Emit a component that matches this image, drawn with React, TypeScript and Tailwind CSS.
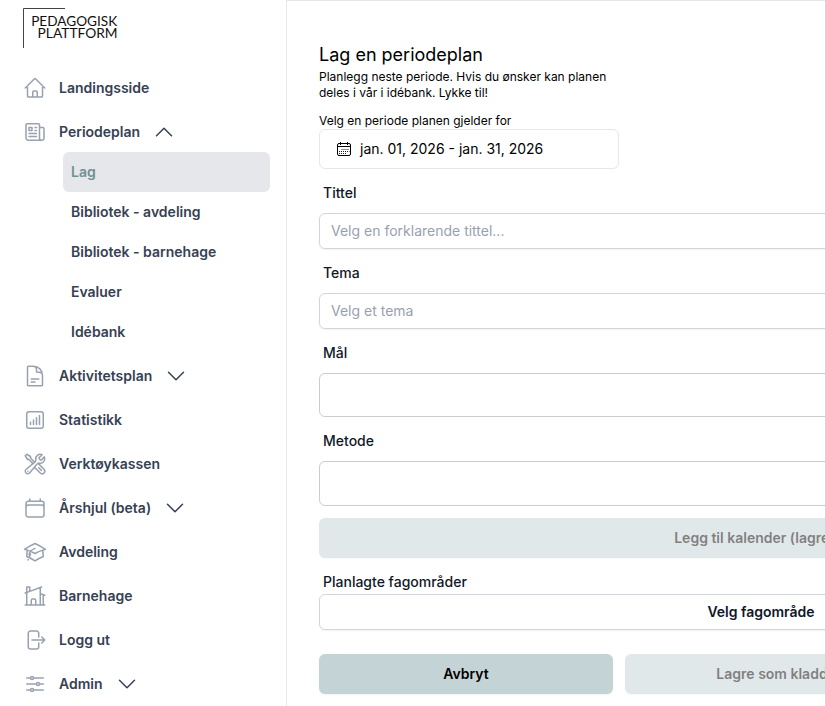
import type { ReactNode } from "react";
import clsx from "clsx";
import {
  HiOutlineHome,
  HiOutlineNewspaper,
  HiOutlineDocumentText,
  HiOutlineWrenchScrewdriver,
  HiOutlineCalendar,
  HiOutlineAcademicCap,
  HiOutlineHomeModern,
  HiOutlineArrowRightOnRectangle,
  HiOutlineAdjustmentsHorizontal,
  HiOutlineChevronDown,
  HiOutlineChevronUp,
} from "react-icons/hi2";
import type { IconType } from "react-icons";

type NavItem = {
  name: string;
  icon: IconType;
  open?: boolean;
  children?: string[];
};

const ChartSquareIcon: IconType = ({ className }) => (
  <svg
    className={className}
    viewBox="0 0 24 24"
    fill="none"
    stroke="currentColor"
    strokeWidth={1.5}
    strokeLinecap="round"
    strokeLinejoin="round"
  >
    <path d="M7.5 14.25v2.25m3-4.5v4.5m3-6.75v6.75m3-9v9M6 20.25h12A2.25 2.25 0 0 0 20.25 18V6A2.25 2.25 0 0 0 18 3.75H6A2.25 2.25 0 0 0 3.75 6v12A2.25 2.25 0 0 0 6 20.25Z" />
  </svg>
);

const MonthIcon = ({ className }: { className?: string }) => (
  <svg className={className} viewBox="0 0 16 16" fill="none" stroke="currentColor">
    <rect x="1.5" y="2.5" width="13" height="12" rx="1.5" />
    <path d="M1.5 5.5h13" />
    <path d="M4.5 1v3M11.5 1v3" />
    <path
      d="M5.5 8.5h8M3 10.5h10.5M3 12.5h8"
      strokeWidth="0.9"
      strokeDasharray="1 1"
    />
  </svg>
);

const navigation: NavItem[] = [
  { name: "Landingsside", icon: HiOutlineHome },
  {
    name: "Periodeplan",
    icon: HiOutlineNewspaper,
    open: true,
    children: [
      "Lag",
      "Bibliotek - avdeling",
      "Bibliotek - barnehage",
      "Evaluer",
      "Idébank",
    ],
  },
  { name: "Aktivitetsplan", icon: HiOutlineDocumentText, children: [] },
  { name: "Statistikk", icon: ChartSquareIcon },
  { name: "Verktøykassen", icon: HiOutlineWrenchScrewdriver },
  { name: "Årshjul (beta)", icon: HiOutlineCalendar, children: [] },
  { name: "Avdeling", icon: HiOutlineAcademicCap },
  { name: "Barnehage", icon: HiOutlineHomeModern },
  { name: "Logg ut", icon: HiOutlineArrowRightOnRectangle },
  { name: "Admin", icon: HiOutlineAdjustmentsHorizontal, children: [] },
];

const Logo = () => (
  <svg className="block h-10 w-24" viewBox="0 0 96 40">
    <path d="M0.5 40V0.5H42" fill="none" stroke="#444" strokeWidth="1" />
    <g fill="#111" fontFamily="Lato, sans-serif" fontSize="13.4">
      <text x="8.2" y="18" textLength="86" lengthAdjust="spacingAndGlyphs">
        PEDAGOGISK
      </text>
      <text x="14.6" y="30.2" textLength="80" lengthAdjust="spacingAndGlyphs">
        PLATTFORM
      </text>
    </g>
  </svg>
);

const Sidebar = () => (
  <aside className="flex w-[287px] shrink-0 flex-col border-r border-gray-200 pl-[23px] pt-2">
    <Logo />
    <nav className="mt-5 w-[247px]">
      <ul className="flex flex-col gap-1">
        {navigation.map((item) => (
          <li key={item.name}>
            <a
              href="#"
              className="flex h-10 items-center text-sm font-semibold text-gray-700"
            >
              <item.icon className="h-6 w-6 text-gray-400" />
              <span className="ml-3">{item.name}</span>
              {item.children &&
                (item.open ? (
                  <HiOutlineChevronUp className="ml-3 h-6 w-6" />
                ) : (
                  <HiOutlineChevronDown className="ml-3 h-6 w-6" />
                ))}
            </a>
            {item.open && (
              <ul className="ml-10">
                {item.children?.map((child) => (
                  <li key={child}>
                    <a
                      href="#"
                      className={clsx(
                        "flex h-10 items-center rounded-md px-2 text-sm font-semibold",
                        child === "Lag"
                          ? "bg-gray-200 text-[#729094]"
                          : "text-gray-700"
                      )}
                    >
                      {child}
                    </a>
                  </li>
                ))}
              </ul>
            )}
          </li>
        ))}
      </ul>
    </nav>
  </aside>
);

const Label = ({ children }: { children: ReactNode }) => (
  <label className="block pl-1 text-sm font-medium leading-6 text-gray-900">
    {children}
  </label>
);

const inputStyle =
  "block w-full rounded-md border border-gray-300 px-[11px] pb-0.5 text-sm shadow-xs placeholder:text-gray-400";

const PlanForm = () => (
  <form className="w-[906px]">
    <h1 className="text-lg leading-7">Lag en periodeplan</h1>
    <p className="w-72 text-xs">
      Planlegg neste periode. Hvis du ønsker kan planen deles i vår i idébank.
      Lykke til!
    </p>
    <p className="mt-3 text-xs">Velg en periode planen gjelder for</p>
    <button
      type="button"
      className="flex h-10 w-[300px] items-center rounded-md border border-gray-200 px-4 text-sm"
    >
      <MonthIcon className="mr-2 h-4 w-4" />
      jan. 01, 2026 - jan. 31, 2026
    </button>
    <div className="mt-3">
      <Label>Tittel</Label>
      <input
        className={clsx(inputStyle, "mt-2 h-9")}
        placeholder="Velg en forklarende tittel..."
      />
    </div>
    <div className="mt-3">
      <Label>Tema</Label>
      <input
        className={clsx(inputStyle, "mt-2 h-9")}
        placeholder="Velg et tema"
      />
    </div>
    <div className="mt-3">
      <Label>Mål</Label>
      <div className="mt-2 h-11 rounded-md border border-[#ccc]" />
    </div>
    <div className="mt-3">
      <Label>Metode</Label>
      <div className="mt-2 h-[45px] rounded-md border border-[#ccc]" />
    </div>
    <button
      type="button"
      disabled
      className="mt-3 flex h-10 w-full items-center justify-center rounded-md bg-[#c4d3d6] text-sm font-semibold text-black opacity-50 shadow-xs"
    >
      Legg til kalender (lagre først)
    </button>
    <div className="mt-3">
      <Label>Planlagte fagområder</Label>
      <button
        type="button"
        className="flex h-9 w-full items-center justify-center gap-x-2.5 rounded-md border border-gray-300 text-sm font-semibold text-gray-900 shadow-xs"
      >
        Velg fagområde
        <HiOutlineChevronDown className="h-3 w-3" />
      </button>
    </div>
    <div className="mt-6 grid grid-cols-3 gap-3 text-sm font-semibold text-black">
      <button type="button" className="h-10 rounded-md bg-[#c4d3d6] shadow-xs">
        Avbryt
      </button>
      <button
        type="button"
        disabled
        className="h-10 rounded-md bg-[#c4d3d6] opacity-50 shadow-xs"
      >
        Lagre som kladd
      </button>
      <button
        type="button"
        disabled
        className="h-10 rounded-md bg-[#c4d3d6] opacity-50 shadow-xs"
      >
        Lagre
      </button>
    </div>
  </form>
);

export default function App() {
  return (
    <div className="flex h-screen overflow-hidden bg-white font-['Inter',sans-serif] text-black">
      <Sidebar />
      <main className="min-w-0 flex-1 overflow-hidden border-t border-gray-200 pl-8 pt-10">
        <PlanForm />
      </main>
    </div>
  );
}
